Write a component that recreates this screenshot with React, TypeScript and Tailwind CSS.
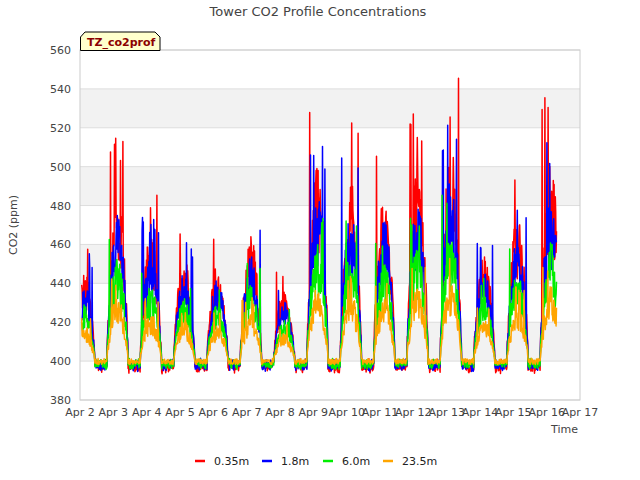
import React from "react";

function rng(seed: number) {
  let a = seed;
  return () => {
    a |= 0; a = (a + 0x6d2b79f5) | 0;
    let t = Math.imul(a ^ (a >>> 15), 1 | a);
    t = (t + Math.imul(t ^ (t >>> 7), 61 | t)) ^ t;
    return ((t ^ (t >>> 14)) >>> 0) / 4294967296;
  };
}

const X0 = 80, X1 = 580, Y0 = 50, Y1 = 400;
const xs = (d: number) => X0 + (d / 15) * (X1 - X0);
const ys = (v: number) => Y1 - ((v - 380) / 180) * (Y1 - Y0);
const peaks = [465, 518, 488, 472, 466, 487, 450, 534, 524, 514, 532, 547, 474, 501, 537, 460];
const facs = [1, 0.85, 0.6, 0.38];
const colors = ["#ff0000", "#0000ff", "#00ee00", "#ffa500"];

function series(k: number) {
  const r = rng(17 + k * 101);
  const pts: string[] = [];
  for (let t = 0.05; t <= 14.3; t += 0.012) {
    const day = Math.floor(t + 0.2);
    const q = (t + 0.2) % 1;
    let w = 0;
    if (q < 0.65) w = Math.pow(Math.sin((Math.PI * q) / 0.65), 0.8);
    const A = (peaks[Math.min(day, 15)] - 400) * facs[k];
    let v = 400 + w * (A * 0.4 + A * 0.35 * r());
    if (r() < 0.05 && w > 0.3) v = 400 + A * (0.85 + 0.15 * r());
    if (w < 0.1) v = 400 - (k === 3 ? 1 : 5) * r() * (1 - k * 0.2) + (r() - 0.5) * 3;
    v = Math.max(388, Math.min(548, v));
    pts.push(`${xs(t).toFixed(1)},${ys(v).toFixed(1)}`);
  }
  return pts.join(" ");
}

export default function App() {
  const days = Array.from({ length: 16 }, (_, i) => i);
  const grid = [380, 400, 420, 440, 460, 480, 500, 520, 540, 560];
  return (
    <div className="w-[640px] h-[480px] bg-white" style={{ fontFamily: "'DejaVu Sans', sans-serif" }}>
      <svg width="640" height="480" className="block">
        <text x="318" y="16" textAnchor="middle" fontSize="13" fill="#444">Tower CO2 Profile Concentrations</text>
        {[520, 480, 440, 400].map((g) => (
          <rect key={g} x={X0} y={ys(g + 20)} width={X1 - X0} height={ys(g) - ys(g + 20)} fill="#f2f2f2" />
        ))}
        {grid.map((g) => (
          <g key={g}>
            <line x1={X0} x2={X1} y1={ys(g)} y2={ys(g)} stroke="#dddddd" strokeWidth="1" />
            <text x="71" y={ys(g) + 4} textAnchor="end" fontSize="11" fill="#444">{g}</text>
          </g>
        ))}
        <rect x={X0} y={Y0} width={X1 - X0} height={Y1 - Y0} fill="none" stroke="#cccccc" />
        {days.map((d) => (
          <text key={d} x={xs(d)} y="416" textAnchor="middle" fontSize="11" fill="#444">Apr {d + 2}</text>
        ))}
        <text x="578" y="433" textAnchor="end" fontSize="11" fill="#444">Time</text>
        <text transform="translate(17,225) rotate(-90)" textAnchor="middle" fontSize="11" fill="#444">CO2 (ppm)</text>
        {[0, 1, 2, 3].map((k) => (
          <polyline key={k} points={series(k)} fill="none" stroke={colors[k]} strokeWidth="1.5" strokeLinejoin="round" />
        ))}
        <path d="M80.5,50.5 V37 L85,32 H155 L160,37 V50.5 Z" fill="#ffffcc" stroke="#000" />
        <text x="87" y="46" fontSize="11" fontWeight="bold" fill="#8b0000">TZ_co2prof</text>
        {[["0.35m", 195], ["1.8m", 262], ["6.0m", 323], ["23.5m", 383]].map(([l, x], k) => (
          <g key={l as string}>
            <line x1={x as number} x2={(x as number) + 10} y1="461" y2="461" stroke={colors[k]} strokeWidth="2.5" />
            <text x={(x as number) + 19} y="465" fontSize="11" fill="#222">{l}</text>
          </g>
        ))}
      </svg>
    </div>
  );
}
